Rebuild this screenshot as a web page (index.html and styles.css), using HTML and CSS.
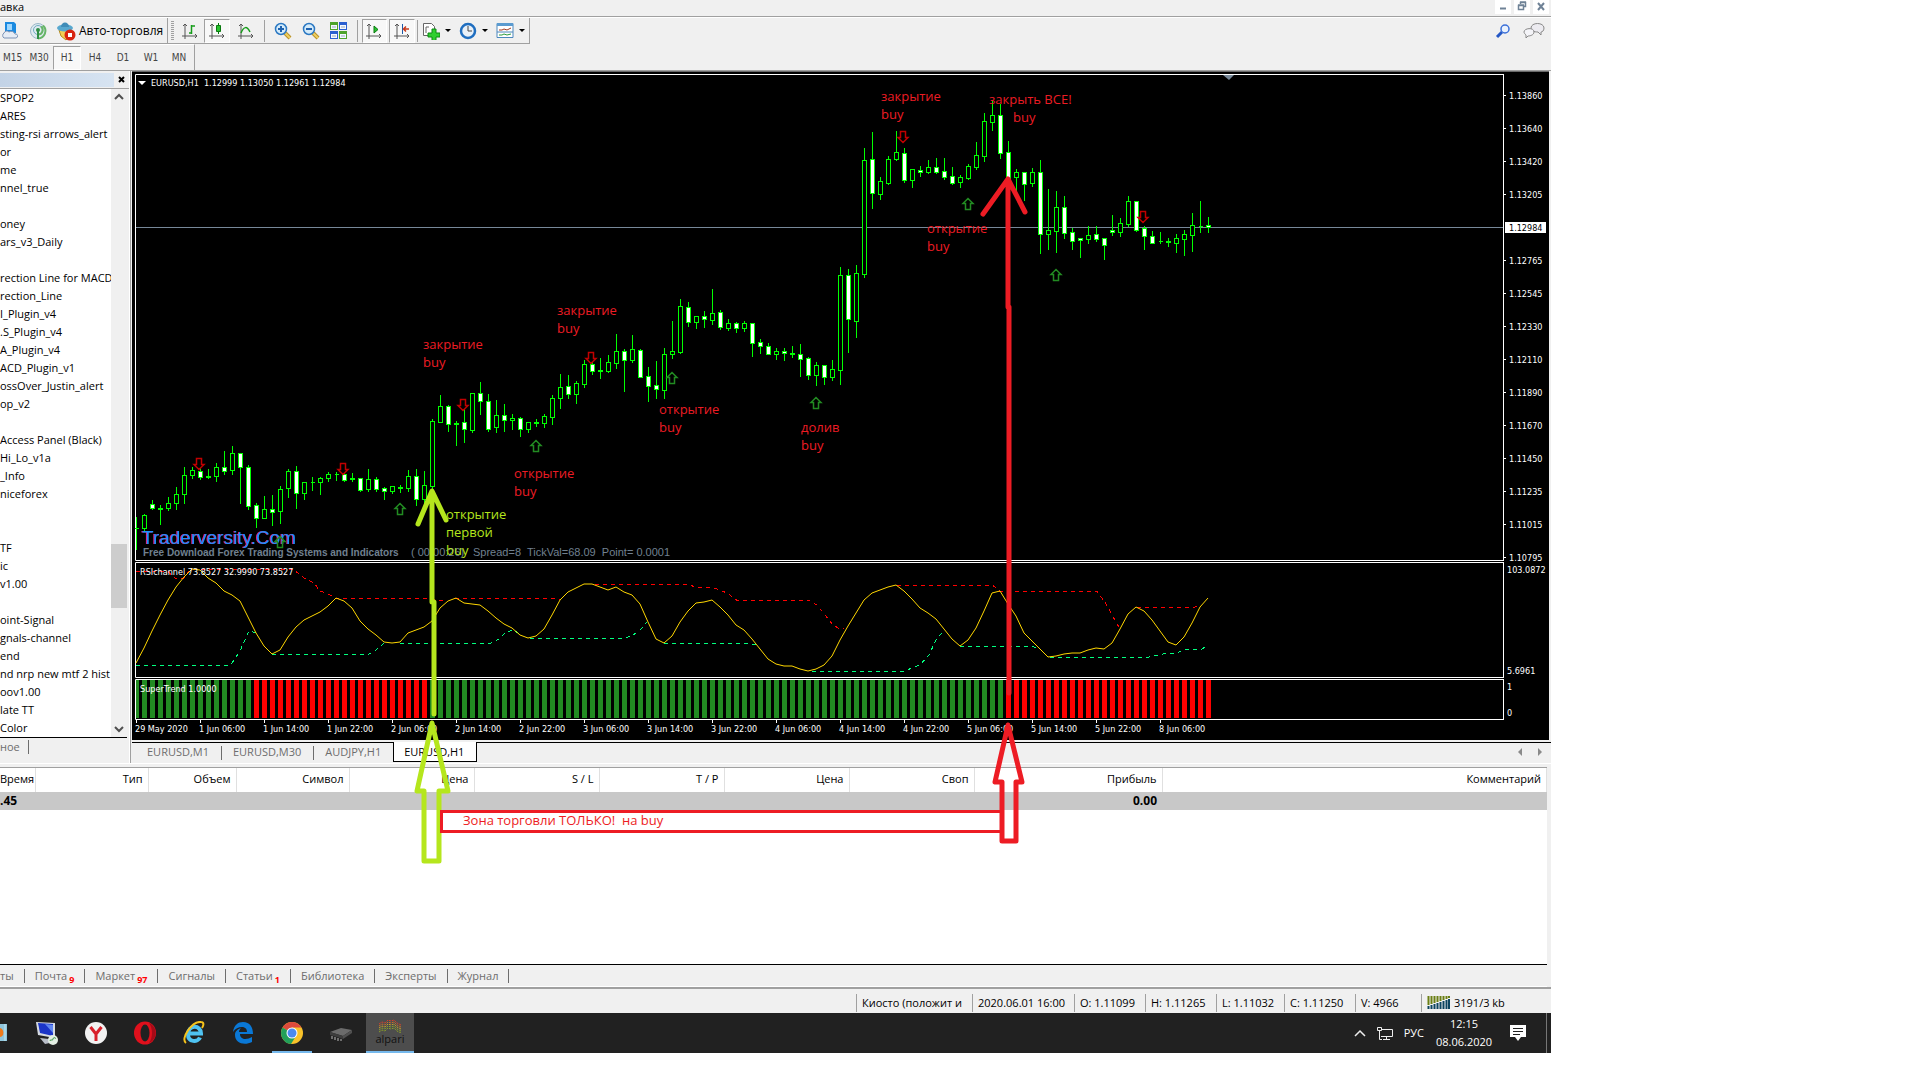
FILE: index.html
```html
<!DOCTYPE html>
<html lang="ru">
<head>
<meta charset="utf-8">
<title>EURUSD,H1</title>
<link rel="stylesheet" href="styles.css">
</head>
<body>
<div class="screen">
  <header class="menubar">
    <a class="menu-item" href="#help">авка</a>
    <div class="window-buttons">
      <button class="window-button" aria-label="Свернуть"><svg width="16" height="14"><path d="M5 8.500h6" stroke="#6f8296" stroke-width="2"/></svg></button>
      <button class="window-button" aria-label="Восстановить"><svg width="16" height="14" fill="none" stroke="#6f8296"><path d="M4.500 5.500h5v4h-5zM4 5h6M6.500 4V2.500h5v4H10M6 2h6" stroke-width="1.500"/></svg></button>
      <button class="window-button" aria-label="Закрыть"><svg width="16" height="14"><path d="M5 3l6 7M11 3l-6 7" stroke="#6f8296" stroke-width="2"/></svg></button>
    </div>
  </header>

  <div class="toolbar-row">
    <div class="toolbar toolbar-main">
      <button class="tool" aria-label="Облако"><svg width="20" height="20"><path d="M5 1h9l2 2v9H5z" fill="#1c8ae0"/><path d="M7 3h5v6H7z" fill="#9fd8ff"/><path d="M4 17a3 3 0 0 1 0-5 3 3 0 0 1 5-1 4 4 0 0 1 6 2 2 2 0 0 1 1 4z" fill="#e6ecf5" stroke="#7d93b5"/></svg></button>
      <button class="tool" aria-label="Сигналы"><svg width="20" height="20" fill="none"><circle cx="10" cy="10" r="7.500" fill="#dfeaf0" stroke="#9ab8c8"/><circle cx="10" cy="9" r="4.500" stroke="#6faac0"/><path d="M10 17.500a7.500 7.500 0 0 0 5-13M10 13.500a4.500 4.500 0 0 0 3-8" stroke="#67b567" stroke-width="2"/><path d="M10 9v9" stroke="#2f8e45" stroke-width="2"/><circle cx="10" cy="9" r="2" fill="#2f8e45"/></svg></button>
      <button class="tool tool-text"><svg width="20" height="20"><path d="M3 9l7-1 6 1-2 6-4 4-5-4z" fill="#f3cf52" stroke="#b98c1d"/><ellipse cx="9" cy="7" rx="8" ry="3.500" fill="#58a8cf"/><path d="M5 6c0-6 8-6 8 0z" fill="#3f8cb8"/><circle cx="14" cy="14" r="5.500" fill="#d8230f"/><path d="M12 12h4v4h-4z" fill="#fff"/></svg>Авто-торговля</button>
    </div>
    <div class="toolbar toolbar-chart">
      <span class="grip"></span>
      <button class="tool wide" aria-label="Бары"><svg width="16" height="16" fill="none"><path d="M3 1v15M0 13h15M1 3l2-2 2 2M13 11l2 2-2 2" stroke="#555"/><path d="M9.500 2v9M7 10h2M10 3h3" stroke="#169c1a" stroke-width="1.500"/></svg></button>
      <button class="tool wide pressed" aria-label="Свечи"><svg width="16" height="16" fill="none"><path d="M3 1v15M0 13h15M1 3l2-2 2 2M13 11l2 2-2 2" stroke="#555"/><path d="M9.500 0v11" stroke="#0b7a10"/><path d="M7.500 2.500h4v6h-4z" fill="#28c22e" stroke="#0b7a10"/></svg></button>
      <button class="tool wide" aria-label="Линия"><svg width="16" height="16" fill="none"><path d="M3 1v15M0 13h15M1 3l2-2 2 2M13 11l2 2-2 2" stroke="#555"/><path d="M3 10c3-7 6-7 9-1" stroke="#169c1a" stroke-width="1.500"/></svg></button>
      <span class="divider"></span>
      <button class="tool wide" aria-label="Увеличить"><svg width="18" height="18"><path d="M11 11l5 5" stroke="#b8912a" stroke-width="4"/><path d="M11 11l5 5" stroke="#f0d060" stroke-width="2"/><circle cx="7" cy="7" r="5.500" fill="#d4ebfa" stroke="#2b78c2" stroke-width="1.500"/><path d="M4 7h6M7 4v6" stroke="#1e62b0" stroke-width="2"/></svg></button>
      <button class="tool wide" aria-label="Уменьшить"><svg width="18" height="18"><path d="M11 11l5 5" stroke="#b8912a" stroke-width="4"/><path d="M11 11l5 5" stroke="#f0d060" stroke-width="2"/><circle cx="7" cy="7" r="5.500" fill="#d4ebfa" stroke="#2b78c2" stroke-width="1.500"/><path d="M4 7h6" stroke="#1e62b0" stroke-width="2"/></svg></button>
      <button class="tool wide" aria-label="Плитка"><svg width="17" height="18"><path d="M0 0h8v8H0zM9 9h8v8H9z" fill="#4da32a"/><path d="M9 0h8v8H9zM0 9h8v8H0z" fill="#2a5fd0"/><path d="M1 3h6v4H1zM10 3h6v4h-6zM1 12h6v4H1zM10 12h6v4h-6z" fill="#f4f8ff"/><path d="M2 5h4M11 5h4M2 14h4M11 14h4" stroke="#9ab"/></svg></button>
      <span class="divider"></span>
      <button class="tool wide pressed" aria-label="Автопрокрутка"><svg width="16" height="16" fill="none"><path d="M3 1v15M0 13h15M1 3l2-2 2 2M13 11l2 2-2 2" stroke="#555"/><path d="M8 3l4 3.500L8 10z" fill="#28c22e" stroke="#0b7a10"/></svg></button>
      <button class="tool wide pressed" aria-label="Сдвиг графика"><svg width="16" height="16" fill="none"><path d="M3 1v15M0 13h15M1 3l2-2 2 2M13 11l2 2-2 2" stroke="#555"/><path d="M8.500 1v10" stroke="#1d5aa8"/><path d="M10 6h5M12 3.500L9.500 6l2.500 2.500" stroke="#c8381a" stroke-width="1.500"/></svg></button>
      <span class="divider"></span>
      <button class="tool drop" aria-label="Индикаторы"><svg width="18" height="18"><path d="M1.500 1.500h8l3 3v9h-11z" fill="#fff" stroke="#666"/><path d="M4 5v6M4 5h3" stroke="#666" fill="none"/><path d="M10 7h4v4h4v4h-4v4h-4v-4H6v-4h4z" fill="#2fcf2f" stroke="#0d8a12"/></svg><i class="caret"></i></button>
      <button class="tool drop" aria-label="Периоды"><svg width="18" height="18"><circle cx="9" cy="9" r="7" fill="#e8f0f8" stroke="#1f6ec0" stroke-width="2.500"/><path d="M9 4v5h4" stroke="#444" fill="none"/></svg><i class="caret"></i></button>
      <button class="tool drop" aria-label="Шаблоны"><svg width="18" height="18"><path d="M1 1.500h16v14H1z" fill="#fff" stroke="#4c88bd"/><path d="M1 1h16v3H1z" fill="#5b9bd0"/><path d="M3 8h3l2-1 3 1 4-2" stroke="#a33a20" fill="none"/><path d="M1 10h16" stroke="#4c88bd"/><path d="M3 13h3l2-1 3 1 4-1" stroke="#2c9a3c" fill="none"/></svg><i class="caret"></i></button>
    </div>
    <div class="toolbar-right">
      <button class="tool" aria-label="Поиск"><svg width="16" height="16" fill="none"><path d="M2 14l5-5" stroke="#2457c5" stroke-width="3"/><circle cx="10" cy="6" r="4" fill="#eaf2fd" stroke="#3a6fd8" stroke-width="1.500"/></svg></button>
      <button class="tool" aria-label="Чат"><svg width="22" height="18"><path d="M8 6c0-6 13-6 13 0 0 3-2 4-3 4v3l-3-3c-4 0-7-1-7-4z" fill="#ecebf0" stroke="#888"/><path d="M1 10c0-4 10-5 10 0 0 3-4 4-6 4l-2 2v-3C2 12 1 11 1 10z" fill="#f4f4f8" stroke="#888"/></svg></button>
    </div>
  </div>

  <div class="timeframes">
    <button class="tf tf-cut">M15</button><button class="tf">M30</button><button class="tf pressed">H1</button><button class="tf">H4</button><button class="tf">D1</button><button class="tf">W1</button><button class="tf">MN</button>
  </div>

  <main class="workspace">
    <aside class="navigator">
      <div class="nav-title"><span class="nav-title-fill"></span><button class="nav-close" aria-label="Закрыть"><svg width="8" height="8"><path d="M1 1l5 5M6 1L1 6" stroke="#000" stroke-width="2"/></svg></button></div>
      <div class="nav-body">
        <ul class="nav-list">
          <li>SPOP2</li><li>ARES</li><li>sting-rsi arrows_alert</li><li>or</li><li>me</li><li>nnel_true</li><li></li><li>oney</li><li>ars_v3_Daily</li><li></li><li>rection Line for MACD</li><li>rection_Line</li><li>I_Plugin_v4</li><li>.S_Plugin_v4</li><li>A_Plugin_v4</li><li>ACD_Plugin_v1</li><li>ossOver_Justin_alert</li><li>op_v2</li><li></li><li>Access Panel (Black)</li><li>Hi_Lo_v1a</li><li>_Info</li><li>niceforex</li><li></li><li></li><li>TF</li><li>ic</li><li>v1.00</li><li></li><li>oint-Signal</li><li>gnals-channel</li><li>end</li><li>nd nrp new mtf 2 hist</li><li>oov1.00</li><li>late TT</li><li>Color</li>
        </ul>
        <div class="scrollbar">
          <svg width="16" height="16" fill="none"><path d="M4 10l4-4 4 4" stroke="#505050" stroke-width="2"/></svg>
          <span class="thumb"></span>
          <svg width="16" height="16" fill="none"><path d="M4 6l4 4 4-4" stroke="#505050" stroke-width="2"/></svg>
        </div>
      </div>
      <div class="nav-tabs"><a href="#favorites">ное</a></div>
    </aside>

    <section class="charts">
      <div class="chart">
        <svg class="plot" role="img" aria-label="EURUSD,H1">
          <g transform="translate(-132 -72)">
            <g class="frame">
              <path d="M135.500 560.500V74.500H3000M135.500 560.500H3000M3000 562.500H135.500V677.500H3000M3000 679.500H135.500V719.500H3000"/>
              <path d="M136.500 719v4M200.500 719v4M264.500 719v4M328.500 719v4M392.500 719v4M456.500 719v4M520.500 719v4M584.500 719v4M648.500 719v4M712.500 719v4M776.500 719v4M840.500 719v4M904.500 719v4M968.500 719v4M1032.500 719v4M1096.500 719v4M1160.500 719v4"/>
            </g>
            <path d="M1223 75h11l-5 5z" fill="#778899"/>
            <path d="M136 227.500H3000" stroke="#778899"/>
            <g id="candles"></g>
            <text class="brand" x="142" y="544">Traderversity.Com</text>
            <g id="signals"></g>
            <text class="slogan" x="143" y="556">Free Download Forex Trading Systems and Indicators</text>
            <text class="info" x="411" y="556">( 00:00:26)</text>
            <text class="info" x="473" y="556">Spread=8&#160; TickVal=68.09&#160; Point= 0.0001</text>
            <g class="dash upper">
              <path d="M136 571.500H168L176 579 184 578 190 569.500 294 570 304 578 314 583 320 591 328 594 336 598.500H426L438 600 444 601"/>
              <path d="M455 598.500H557L561 600M595 584.500H690L695 587.500H713L727 593 737 600.500H809L817 605 825 615 833 625 840 629 844 628"/>
              <path d="M897 585.500H993L1000 591.500H1097L1105 602 1112 615 1120 629M1137 607.500H1193L1200 606"/>
            </g>
            <g class="dash lower">
              <path d="M136 665.500H228L232 663 240 651 248 633 250 631 256 633M272 654.500H368L376 650 384 643M400 643.500H490L496 641 501 637 506 632 514 630 519 634"/>
              <path d="M530 638.500H622L632 636 640 630 647 622M664 643.500H750L756 645M812 671.500H903L920 665 929 655 936 640 944 630"/>
              <path d="M960 646.500H1032L1040 649M1050 657.500H1146L1154 656 1163 654 1176 653 1184 650 1202 649 1208 645"/>
            </g>
            <polyline id="rsi"/>
            <g id="trend"></g>
            <path d="M138 81h8l-4 4z" fill="#fff"/>
            <text class="tiny" x="151" y="86">EURUSD,H1&#160; 1.12999 1.13050 1.12961 1.12984</text>
            <text class="tiny" x="140" y="575">RSIchannel 73.8527 32.9990 73.8527</text>
            <text class="tiny" x="140" y="692">SuperTrend 1.0000</text>
            <g class="tiny">
              <text x="135" y="732">29 May 2020</text><text x="199" y="732">1 Jun 06:00</text><text x="263" y="732">1 Jun 14:00</text><text x="327" y="732">1 Jun 22:00</text><text x="391" y="732">2 Jun 06:00</text><text x="455" y="732">2 Jun 14:00</text><text x="519" y="732">2 Jun 22:00</text><text x="583" y="732">3 Jun 06:00</text><text x="647" y="732">3 Jun 14:00</text><text x="711" y="732">3 Jun 22:00</text><text x="775" y="732">4 Jun 06:00</text><text x="839" y="732">4 Jun 14:00</text><text x="903" y="732">4 Jun 22:00</text><text x="967" y="732">5 Jun 06:00</text><text x="1031" y="732">5 Jun 14:00</text><text x="1095" y="732">5 Jun 22:00</text><text x="1159" y="732">8 Jun 06:00</text>
            </g>
          </g>
        </svg>
        <svg class="scale" role="img" aria-label="Цена">
          <g transform="translate(0 -72)">
            <path class="frame" d="M.5 74V561M.5 562V678M.5 679V720M1 95.500h2M1 128.500h2M1 161.500h2M1 194.500h2M1 260.500h2M1 293.500h2M1 326.500h2M1 359.500h2M1 392.500h2M1 425.500h2M1 458.500h2M1 491.500h2M1 524.500h2M1 557.500h2"/>
            <path d="M2 222h41v11H2z" fill="#fff"/>
            <g class="tiny">
              <text x="6" y="99">1.13860</text><text x="6" y="132">1.13640</text><text x="6" y="165">1.13420</text><text x="6" y="198">1.13205</text><text class="current" x="6" y="231">1.12984</text><text x="6" y="264">1.12765</text><text x="6" y="297">1.12545</text><text x="6" y="330">1.12330</text><text x="6" y="363">1.12110</text><text x="6" y="396">1.11890</text><text x="6" y="429">1.11670</text><text x="6" y="462">1.11450</text><text x="6" y="495">1.11235</text><text x="6" y="528">1.11015</text><text x="6" y="561">1.10795</text>
              <text x="4" y="573">103.0872</text><text x="4" y="674">5.6961</text><text x="4" y="690">1</text><text x="4" y="716">0</text>
            </g>
          </g>
        </svg>
      </div>
      <nav class="chart-tabs">
        <a href="#m1">EURUSD,M1</a><a href="#m30">EURUSD,M30</a><a href="#audjpy">AUDJPY,H1</a><a class="active" href="#h1">EURUSD,H1</a>
        <span class="tab-scroll"><svg width="40" height="10"><path d="M11 1v8L7 5zM27 1v8l4-4z" fill="#8a8a8a"/></svg></span>
      </nav>
    </section>
  </main>

  <section class="terminal">
    <table class="orders">
      <colgroup><col class="c-time"><col class="c-type"><col class="c-vol"><col class="c-sym"><col class="c-num"><col class="c-num"><col class="c-num"><col class="c-num"><col class="c-num"><col class="c-profit"><col></colgroup>
      <thead><tr><th>Время</th><th>Тип</th><th>Объем</th><th>Символ</th><th>Цена</th><th>S / L</th><th>T / P</th><th>Цена</th><th>Своп</th><th>Прибыль</th><th>Комментарий</th></tr></thead>
      <tbody><tr><td class="balance">.45</td><td></td><td></td><td></td><td></td><td></td><td></td><td></td><td></td><td>0.00</td><td></td></tr></tbody>
    </table>
    <nav class="terminal-tabs">
      <a href="#alerts">ты</a><a href="#mail">Почта<sub>9</sub></a><a href="#market">Маркет<sub>97</sub></a><a href="#signals">Сигналы</a><a href="#articles">Статьи<sub>1</sub></a><a href="#library">Библиотека</a><a href="#experts">Эксперты</a><a href="#journal">Журнал</a>
    </nav>
  </section>

  <footer class="statusbar">
    <span class="st st-profile">Киосто (положит и</span><span class="st st-date">2020.06.01 16:00</span><span class="st st-price">O: 1.11099</span><span class="st st-price">H: 1.11265</span><span class="st st-low">L: 1.11032</span><span class="st st-price">C: 1.11250</span><span class="st st-vol">V: 4966</span>
    <span class="st st-net"><svg width="23" height="13"><path d="M1.500 0v9M4.500 0v8M7.500 0v7M10.500 0v6M13.500 0v5M16.500 0v4M19.500 0v3M22 0v2" stroke="#6b7f14" stroke-width="2"/><path d="M1.500 10v3M4.500 9v4M7.500 8v5M10.500 7v6M13.500 6v7M16.500 5v8M19.500 4v9M22 3v10" stroke="#0d4560" stroke-width="2"/></svg>3191/3 kb</span>
  </footer>

  <footer class="taskbar">
    <button class="app app-cut" aria-label="Проводник"><svg width="8" height="24"><path d="M0 3h7v17H0z" fill="#8fc6dc"/><path d="M0 7c4 0 5 9 0 9z" fill="#f07a1a"/><path d="M5 3v17" stroke="#c8e6f0"/></svg></button>
    <button class="app" aria-label="Компьютер"><svg width="24" height="24"><path d="M1 1l19 1v15L3 14z" fill="#d5dae2"/><path d="M3 2l15 1v12L5 12z" fill="#1b35c8"/><path d="M10 3l8 1v8z" fill="#5f86f0"/><path d="M5 17l9 1 5 3-9 2z" fill="#b9bec8"/><circle cx="18" cy="19" r="5" fill="#e4efe4"/><path d="M15 20c1-3 2 1 3-2s2 0 3-1" stroke="#2a8a3a" fill="none"/></svg></button>
    <button class="app" aria-label="Яндекс"><svg width="24" height="24"><circle cx="12" cy="12" r="11" fill="#f2f2f2"/><path d="M6.500 6l5.500 7 5.500-7M12 12v8" stroke="#d8202a" stroke-width="3" fill="none"/></svg></button>
    <button class="app" aria-label="Opera"><svg width="24" height="24"><ellipse cx="12" cy="12" rx="11" ry="11.500" fill="#e0101c"/><ellipse cx="12" cy="12" rx="4.500" ry="8.500" fill="#212121"/><path d="M16 2c9 4 9 16 0 20 4-6 4-14 0-20z" fill="#a50b18"/></svg></button>
    <button class="app" aria-label="Internet Explorer"><svg width="24" height="24" fill="none"><path d="M7 12.500h12c0-9-13-9-13 1 0 8 10 8 12 3" stroke="#4fc3f2" stroke-width="4"/><path d="M4 22C-2 18 10 0 19 1c3 0 3 3 1 6" stroke="#f5c31c" stroke-width="2"/></svg></button>
    <button class="app" aria-label="Edge"><svg width="24" height="24"><path d="M2 11C3 4 7 1 12 1c7 0 10 5 10 12H9c0 6 7 6 12 3v5C13 25 4 22 4 14c0-4 3-6 6-7-1 1-2 2-2 4h8c0-7-10-6-14 0z" fill="#0a78d6"/></svg></button>
    <button class="app running" aria-label="Chrome"><svg width="24" height="24"><circle cx="12" cy="12" r="11" fill="#f8c22a"/><path d="M12 12L2.500 6.500A11 11 0 0 1 21.500 6.500H12z" fill="#dd4a3c"/><path d="M12 12L2.500 6.500A11 11 0 0 0 11 23l5-8z" fill="#22a05a"/><circle cx="12" cy="12" r="5.500" fill="#fff"/><circle cx="12" cy="12" r="4.500" fill="#4a8af0"/></svg></button>
    <button class="app" aria-label="Микросхема"><svg width="24" height="24"><path d="M1 11l11-4 11 2-9 6z" fill="#6b6b6b"/><path d="M1 11l13 4v3L1 14z" fill="#3d3d3d"/><path d="M14 15l9-6v3l-9 6z" fill="#505050"/><path d="M3 15v3M6 16v3M9 17v3M12 18v2" stroke="#bbb"/></svg></button>
    <button class="app active"><svg width="24" height="14" fill="none" stroke-dasharray="2 1"><path d="M1 5l3-2 3 1 3-3 3 1 3-1 3 3 4 2" stroke="#d8402a"/><path d="M1 7l3-2 3 1 3-3 3 1 3-1 3 3 4 2" stroke="#c8702a"/><path d="M1 9l3-2 3 1 3-3 3 1 3-1 3 3 4 2" stroke="#c8a02a"/><path d="M1 11l3-2 3 1 3-3 3 1 3-1 3 3 4 2M1 13l3-2 3 1 3-3 3 1 3-1 3 3 4 2" stroke="#8aa028"/></svg><span>alpari</span></button>
    <div class="tray">
      <svg width="12" height="8" fill="none"><path d="M1 7l5-5 5 5" stroke="#eee" stroke-width="1.500"/></svg>
      <svg width="18" height="14" fill="none" stroke="#eee"><path d="M5 3.500h11.500v7H5M1.500 1.500h4v3h-4zM3.500 4.500v9H6M10.500 10.500v3M7 13.500h7"/></svg>
      <span>РУС</span>
      <time class="clock">12:15<br>08.06.2020</time>
      <svg class="action" width="16" height="16"><path d="M0 0h16v12h-5l-3 4-3-4H0z" fill="#fff"/><path d="M3 3.500h10M3 6.500h10M3 9.500h7" stroke="#212121"/></svg>
    </div>
  </footer>

  <svg class="notes" aria-label="Пометки">
    <g class="lime-line">
      <path d="M418 524L432 491 446 520M432 492V602L434 602V714"/>
      <path d="M432 723L417 791H424V861H439V791H448Z"/>
    </g>
    <g class="red-line">
      <path class="zone" d="M1001 811.500H441.500V831.500H1001"/>
      <path d="M983 214L1008 179 1025 212M1008 180V307L1009 307V693"/>
      <path d="M1008 725L995 782H1002V841H1016V782H1022Z"/>
    </g>
    <g class="note">
      <text x="423" y="349">закрытие<tspan x="423" dy="18">buy</tspan></text>
      <text x="557" y="315">закрытие<tspan x="557" dy="18">buy</tspan></text>
      <text x="659" y="414">открытие<tspan x="659" dy="18">buy</tspan></text>
      <text x="514" y="478">открытие<tspan x="514" dy="18">buy</tspan></text>
      <text x="801" y="432">долив<tspan x="801" dy="18">buy</tspan></text>
      <text x="881" y="101">закрытие<tspan x="881" dy="18">buy</tspan></text>
      <text x="989" y="104">закрыть ВСЕ!<tspan x="1013" dy="18">buy</tspan></text>
      <text x="927" y="233">открытие<tspan x="927" dy="18">buy</tspan></text>
      <text x="463" y="825">Зона торговли ТОЛЬКО!&#160; на buy</text>
      <text class="note-lime" x="446" y="519">открытие<tspan x="446" dy="18">первой</tspan><tspan x="446" dy="18">buy</tspan></text>
    </g>
  </svg>
</div>
<script src="script.js"></script>
</body>
</html>
```
FILE: styles.css
```css
* { box-sizing: border-box; }

body {
  margin: 0;
  background: #fff;
  font: 11px/18px "Open Sans", "Noto Sans", sans-serif;
  color: #000;
}

button {
  margin: 0;
  padding: 0;
  border: 0;
  background: none;
  font: inherit;
  color: inherit;
}

a { color: inherit; text-decoration: none; }
svg { display: block; }

.screen {
  position: relative;
  margin-right: 369px;
  background: #f0f0f0;
}

/* menu and toolbars */
.menubar {
  display: flex;
  justify-content: space-between;
  height: 17px;
  border-bottom: 1px solid #a0a0a0;
}
.menu-item { line-height: 13px; }
.window-buttons { display: flex; gap: 3px; padding-right: 2px; }
.window-button { width: 16px; height: 14px; background: #fff; }

.toolbar-row {
  display: flex;
  height: 27px;
  border-top: 1px solid #fff;
}
.toolbar {
  display: flex;
  align-items: center;
  border-right: 1px solid #a0a0a0;
  border-bottom: 1px solid #a0a0a0;
}
.toolbar-main { width: 168px; gap: 8px; }
.toolbar-chart { width: 362px; padding-left: 3px; }
.toolbar-right { display: flex; gap: 12px; align-items: center; margin-left: auto; padding-right: 6px; }
.tool { display: flex; align-items: center; justify-content: center; height: 24px; }
.tool-text { gap: 3px; font-size: 12px; white-space: nowrap; }
.wide { width: 28px; }
.drop { width: 37px; gap: 5px; }
.pressed {
  background: #f8f8f8;
  border: 1px solid #fff;
  border-top-color: #a0a0a0;
  border-left-color: #a0a0a0;
}
.tool.pressed { width: 26px; margin-right: 2px; }
.grip { width: 3px; height: 20px; margin-right: 2px; background: repeating-linear-gradient(#a0a0a0 0 1px, #f0f0f0 1px 2px); }
.divider { width: 1px; height: 22px; margin: 0 4px; background: #a0a0a0; }
.toolbar-chart .divider:nth-last-child(4) { margin: 0; }
.caret { border: 3px solid transparent; border-top-color: #000; border-bottom: 0; }

.timeframes {
  display: flex;
  align-items: center;
  width: 195px;
  height: 26px;
  padding-top: 1px;
  border-right: 1px solid #a0a0a0;
  border-top: 1px solid #fff;
  color: #444;
  font: 10px/12px "DejaVu Sans Condensed", "DejaVu Sans", sans-serif;
}
.tf { width: 28px; height: 24px; }
.tf-cut { width: 25px; }

/* workspace */
.workspace { display: flex; border-top: 1px solid #a0a0a0; }
.navigator {
  width: 130px;
  padding-top: 2px;
  border-right: 1px solid #fff;
}
.nav-title { display: flex; height: 16px; padding-bottom: 1px; border-bottom: 1px solid #a0a0a0; }
.nav-title-fill { width: 114px; background: linear-gradient(90deg, #c3d3e6, #d7e4f2); }
.nav-close { display: flex; flex: 1; align-items: center; justify-content: center; }
.nav-body { display: flex; width: 127px; background: #fff; border-bottom: 1px solid #000; }
.nav-list {
  flex: 1;
  min-width: 0;
  margin: 0;
  padding: 0;
  overflow: hidden;
  list-style: none;
  white-space: nowrap;
}
.nav-list li { height: 18px; }
.scrollbar { display: flex; flex-direction: column; width: 16px; background: #f0f0f0; }
.thumb { height: 64px; margin: auto 0 113px; background: #cdcdcd; }
.nav-tabs { display: flex; height: 23px; padding-top: 1px; color: #6d6d6d; }
.nav-tabs a { width: 29px; height: 14px; line-height: 14px; border-right: 1px solid #6d6d6d; margin-top: 1px; }

.charts { flex: 1; min-width: 0; padding-left: 1px; border-left: 1px solid #a0a0a0; }
.chart {
  display: flex;
  height: 669px;
  margin-right: 2px;
  border-top: 1px solid #696969;
  background: #000;
}
.plot { flex: 1; min-width: 0; height: 668px; }
.scale { width: 46px; height: 668px; }
.frame { fill: none; stroke: #fff; }
.tiny { font: 9px "DejaVu Sans Condensed", "DejaVu Sans", sans-serif; fill: #fff; }
.tiny .current { fill: #000; }
.brand { font: 19px "Liberation Sans", sans-serif; fill: #1e90ff; filter: drop-shadow(-1px 0 0 #e0218a); }
.slogan { font: bold 10px "Liberation Sans", sans-serif; fill: #708090; }
.info { font: 11px "Liberation Sans", sans-serif; fill: #708090; }
.dash { fill: none; stroke-dasharray: 4 4; shape-rendering: crispEdges; }
.upper { stroke: #f00; }
.lower { stroke: #00ff7f; }
#rsi { fill: none; stroke: #ffd700; }
#candles { stroke: #0f0; shape-rendering: crispEdges; }
#candles .up { fill: #000; }
#candles .down { fill: #fff; }
#signals { fill: none; stroke-width: 1.5; }
#signals .sell { stroke: #c00000; }
#signals .buy { stroke: #228b22; }
#trend .up { fill: #228b22; }
#trend .down { fill: #f00; }

.chart-tabs {
  display: flex;
  height: 21px;
  margin-top: 2px;
  border-top: 1px solid #000;
  background: #f0f0f0;
  color: #6d6d6d;
  line-height: 18px;
}
.chart-tabs a { height: 19px; padding: 0 12px; }
.chart-tabs a:first-child { padding-left: 15px; }
.chart-tabs a + a { background: linear-gradient(#6d6d6d, #6d6d6d) 0 3px / 1px 14px no-repeat; }
.chart-tabs a.active {
  margin-top: -1px;
  height: 20px;
  padding: 1px 12px 0 10px;
  border: 1px solid #000;
  border-top: 0;
  background: #fff;
  color: #000;
}
.tab-scroll { margin-left: auto; padding-top: 4px; }

/* terminal */
.terminal { padding-right: 4px; border-top: 1px solid #fff; }
.terminal::before { content: ""; display: block; height: 3px; border-bottom: 1px solid #a0a0a0; }
.orders {
  width: 100%;
  border-bottom: 154px solid #fff;
  border-collapse: collapse;
  table-layout: fixed;
  background: #fff;
}
.orders th, .orders td { padding: 0 5px 0 0; text-align: right; white-space: nowrap; }
.orders th { height: 24px; padding-bottom: 2px; border-right: 1px solid #e0e0e0; font-weight: 400; }
.orders td { height: 20px; background: #c8c8c8; font-size: 12px; font-weight: 700; }
.orders .balance { text-align: left; }
.c-time { width: 35px; }
.c-type { width: 113px; }
.c-vol { width: 88px; }
.c-sym { width: 113px; }
.c-num { width: 125px; }
.c-profit { width: 188px; }
.terminal-tabs {
  display: flex;
  align-items: center;
  height: 23px;
  border-top: 1px solid #000;
  border-bottom: 1px solid #fff;
  color: #6d6d6d;
}
.terminal-tabs a { height: 14px; padding: 0 10px; line-height: 14px; border-right: 1px solid #6d6d6d; }
.terminal-tabs a:first-child { padding-left: 0; }
.terminal-tabs sub { font-size: 9px; font-weight: 700; line-height: 9px; color: #f00; padding-left: 2px; }

.statusbar {
  display: flex;
  justify-content: flex-end;
  align-items: center;
  height: 26px;
  padding: 3px 0 0;
  border-top: 2px solid #a0a0a0;
}
.st { display: flex; align-items: center; gap: 4px; height: 18px; padding-left: 5px; border-left: 1px solid #a0a0a0; white-space: nowrap; overflow: hidden; }
.st-profile { width: 116px; }
.st-date { width: 102px; }
.st-price { width: 71px; }
.st-low { width: 68px; }
.st-vol { width: 66px; }
.st-net { width: 130px; }

/* taskbar */
.taskbar { display: flex; height: 40px; background: #212121; color: #fff; }
.app { display: flex; flex-direction: column; align-items: center; justify-content: center; width: 49px; }
.app-cut { width: 22px; align-items: flex-start; }
.running { background: linear-gradient(#76b9ed, #76b9ed) center bottom / 40px 2px no-repeat; }
.active.app { width: 48px; margin-left: 1px; background: #4d4d4d; border-bottom: 2px solid #76b9ed; color: #111; line-height: 12px; }
.tray { display: flex; align-items: center; gap: 10px; margin-left: auto; padding-right: 20px; border-right: 1px solid #777; margin-right: 4px; }
.clock { width: 60px; text-align: center; }
.action { margin-left: 6px; }

/* hand-drawn marks over the window */
.notes { position: absolute; inset: 0; width: 100%; height: 100%; pointer-events: none; }
.lime-line, .red-line { fill: none; stroke-width: 5; stroke-linecap: round; stroke-linejoin: round; }
.lime-line { stroke: #b5e61d; }
.red-line { stroke: #ed1c24; }
.red-line .zone { stroke-width: 3; stroke-linejoin: miter; }
.note { font: 13px "Open Sans", "Noto Sans", sans-serif; fill: #ed1c24; }
.note .note-lime { fill: #b5e61d; }
```
FILE: script.js
```js
// One entry per hour: high, body top, body bottom, low, 1 when the bar closed down
const BARS = [
[517,528,528,549,0],[514,515,528,530,0],[500,504,508,509,1],[505,508,509,524,1],[497,503,508,510,0],[487,494,503,509,0],[467,475,494,503,0],[467,470,475,478,0],[468,471,477,479,1],[469,476,477,478,0],
[463,467,476,481,0],[451,467,471,474,1],[446,453,470,474,0],[453,453,467,503,1],[465,467,506,509,1],[503,505,518,527,1],[496,509,518,518,0],[495,509,512,525,1],[486,489,511,523,0],[469,471,488,497,0],
[466,471,493,508,1],[482,482,493,499,0],[477,482,482,490,0],[477,478,482,494,0],[472,474,478,481,0],[472,474,474,480,0],[473,474,480,481,1],[473,478,479,481,1],[478,478,490,491,1],[469,479,489,491,0],
[477,479,489,491,1],[487,488,491,499,1],[486,486,491,493,0],[485,487,488,492,1],[470,476,488,491,0],[469,476,499,505,1],[471,485,499,503,0],[419,421,486,492,0],[395,406,422,422,0],[405,406,424,431,1],
[421,423,424,445,0],[409,422,429,442,1],[393,393,430,432,0],[382,393,401,414,1],[394,401,429,431,1],[400,415,427,432,0],[404,415,420,431,1],[414,418,420,429,0],[417,418,429,436,1],[422,422,429,432,0],
[419,422,423,426,1],[414,416,423,427,0],[395,398,417,424,0],[374,387,398,408,0],[375,386,394,398,1],[381,383,394,403,0],[360,364,384,387,0],[362,364,371,374,1],[358,370,371,378,1],[355,362,371,372,0],
[334,351,363,368,0],[349,351,360,391,1],[335,349,360,362,0],[349,350,377,377,1],[367,376,386,401,1],[361,385,389,398,1],[348,354,390,398,0],[321,351,354,358,0],[299,306,352,353,0],[302,307,322,326,1],
[316,316,322,328,0],[311,316,319,327,1],[289,313,320,324,0],[310,312,327,329,1],[319,323,328,330,0],[322,323,328,332,1],[321,323,328,331,0],[323,323,343,356,1],[339,342,346,353,1],[343,346,354,354,1],
[348,351,354,359,0],[348,351,353,360,1],[346,353,354,357,1],[344,354,359,376,1],[357,358,375,379,1],[362,365,375,385,0],[365,365,377,384,1],[360,369,377,380,0],[267,275,370,384,0],[269,275,319,352,1],
[265,273,321,337,0],[148,160,274,277,0],[132,159,193,208,1],[177,181,194,199,0],[156,159,183,184,0],[131,152,159,160,0],[148,153,180,182,1],[169,169,180,187,0],[166,170,172,176,1],[160,167,172,173,0],
[158,167,172,173,1],[158,171,177,179,1],[167,176,183,184,1],[175,177,182,187,0],[164,166,178,179,0],[142,155,167,169,0],[113,121,156,161,0],[100,115,122,130,0],[104,115,153,158,1],[141,152,178,178,1],
[169,172,177,193,0],[172,172,184,200,1],[168,172,183,186,0],[160,172,234,253,1],[189,230,234,249,0],[191,207,231,252,0],[196,207,233,238,1],[228,232,241,249,1],[238,238,240,257,1],[226,235,239,243,0],
[226,234,239,241,1],[238,238,245,259,1],[215,230,232,235,1],[218,223,232,236,0],[196,201,224,226,0],[201,201,230,231,1],[226,228,236,249,1],[231,236,243,243,1],[232,241,241,243,0],[238,241,242,246,1],
[234,238,243,252,0],[230,234,239,255,0],[213,225,235,251,0],[201,226,226,232,0],[217,225,227,232,1]
];

const RSI = [663,648,631,615,600,587,577,569,570,578,583,591,595,601,617,633,646,654,650,637,627,620,616,612,606,598,601,608,621,629,635,642,643,642,633,630,627,621,608,601,598,603,604,605,611,618,624,628,635,638,636,629,615,600,592,588,584,584,587,590,587,592,595,604,622,639,643,636,622,611,603,602,600,607,615,625,630,639,649,659,664,666,666,669,671,669,665,656,640,626,613,600,593,590,587,585,591,599,608,613,619,629,639,646,640,628,611,593,591,604,616,633,641,649,657,656,654,653,653,650,648,649,643,629,614,607,611,620,631,642,645,637,623,607,598];

const SELL = [[199,463],[343,468],[463,404],[591,357],[903,136],[1143,216]];
const BUY = [[280,542],[400,509],[536,446],[672,378],[816,403],[968,204],[1056,275]];

const barX = i => 136 + i * 8;

document.getElementById('candles').innerHTML = BARS.map(([high, top, bottom, low, down], i) => {
  const x = barX(i) + 0.5;
  return `<path d="M${x} ${high}V${low + 1}"/><path class="${down ? 'down' : 'up'}" d="M${x - 2} ${top + 0.5}h4V${bottom + 0.5}h-4z"/>`;
}).join('');

document.getElementById('rsi').setAttribute('points', RSI.map((y, i) => `${barX(i)},${y}`).join(' '));

document.getElementById('trend').innerHTML = BARS.map((_, i) => {
  const down = (i > 14 && i < 37) || i > 108;
  const x = i ? barX(i) - 2 : 136;
  return `<rect class="${down ? 'down' : 'up'}" x="${x}" y="680" width="${i ? 5 : 3}" height="38"/>`;
}).join('');

document.getElementById('signals').innerHTML =
  SELL.map(([x, y]) => `<path class="sell" d="M${x - 2.5} ${y - 4.5}h5v6h2.500l-5 5-5-5h2.500z"/>`).join('') +
  BUY.map(([x, y]) => `<path class="buy" d="M${x - 2.5} ${y + 5.5}h5v-6h2.500l-5-5-5 5h2.500z"/>`).join('');
```
